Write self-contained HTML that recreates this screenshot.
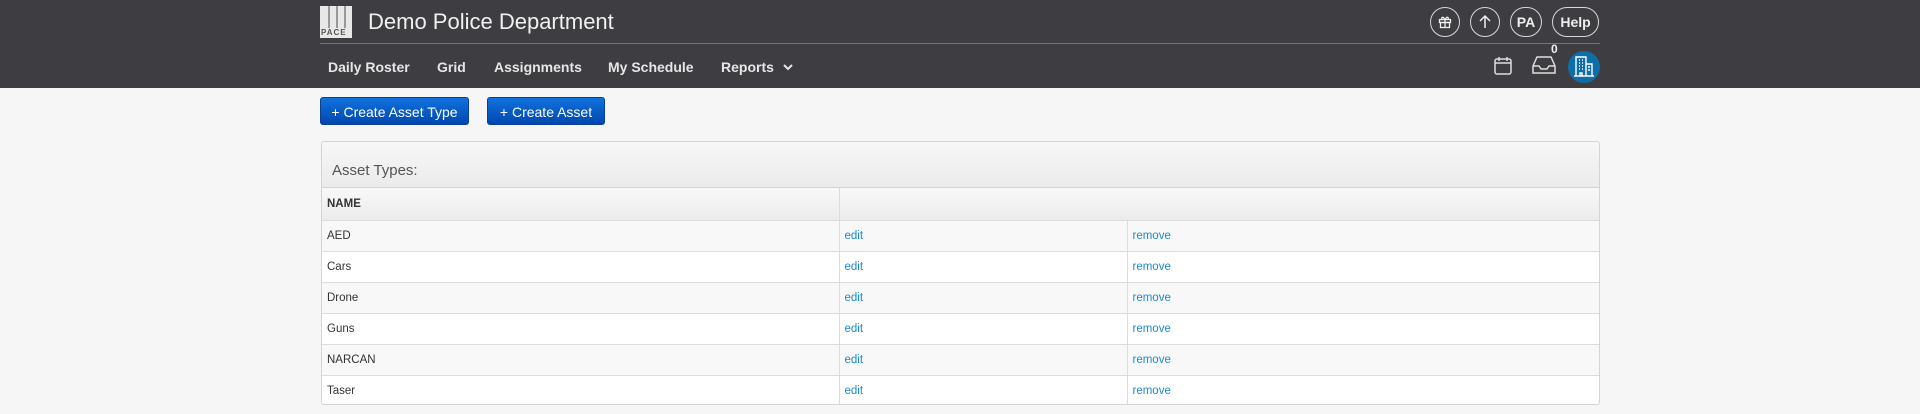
<!DOCTYPE html>
<html><head><meta charset="utf-8"><style>
*{margin:0;padding:0;box-sizing:border-box}
body{width:1920px;height:414px;overflow:hidden;background:#f6f6f6;font-family:"Liberation Sans",sans-serif;position:relative}
.hdr{position:absolute;left:0;top:0;width:1920px;height:88px;background:#3e3e42}
.abs{position:absolute}
.title{left:368px;top:7px;color:#f0f0f0;font-size:22px;line-height:30px}
.sep{left:320px;top:43px;width:1280px;height:1px;background:#76767a}
.nav{top:57px;color:#e6e6e6;font-size:14px;font-weight:bold;line-height:20px}
.circ{border:1.5px solid #d8d8d8;border-radius:16px;color:#eee;height:30px;top:7px;font-size:14px;font-weight:bold;display:flex;align-items:center;justify-content:center}
.btn{top:97px;height:28px;border-radius:3px;background:linear-gradient(#1172dd,#0047b0);color:#fff;font-size:14px;line-height:28px;text-align:center;border:1px solid #0a3f96}
.panel{left:321px;top:141px;width:1279px;height:264px;border:1px solid #d4d4d4;border-radius:3px;background:#fff;overflow:hidden}
.ph{height:46px;background:linear-gradient(#f7f7f7,#ebebeb);border-bottom:1px solid #d4d4d4;font-size:15px;color:#555;padding:20px 0 0 10px}
table{border-collapse:collapse;width:100%;font-size:11.5px;color:#333}
td{height:31px;border-bottom:1px solid #dcdcdc;border-right:1px solid #dcdcdc;padding:0 5px;vertical-align:middle}
td:last-child{border-right:none}
tr.h td{background:linear-gradient(#f8f8f8,#ececec);font-weight:bold;height:32px}
tr.g td{background:#f8f8f8}
tr:last-child td{border-bottom:none}
a{color:#1a8ad1;text-decoration:none}
</style></head><body>
<div class="hdr">
<div class="abs" style="left:320px;top:6px;width:32px;height:32px;background:#e8e8e8">
<div class="abs" style="left:8px;top:0;width:2px;height:22px;background:#999"></div>
<div class="abs" style="left:16px;top:0;width:2px;height:22px;background:#999"></div>
<div class="abs" style="left:24px;top:0;width:2px;height:22px;background:#999"></div>
<div class="abs" style="left:1px;top:22px;font-size:8px;font-weight:bold;color:#555;letter-spacing:1px">PACE</div>
</div>
<div class="abs title">Demo Police Department</div>
<div class="abs sep"></div>
<div class="abs nav" style="left:328px">Daily Roster</div>
<div class="abs nav" style="left:437px">Grid</div>
<div class="abs nav" style="left:494px">Assignments</div>
<div class="abs nav" style="left:608px">My Schedule</div>
<div class="abs nav" style="left:721px">Reports <svg width="12" height="10" viewBox="0 0 12 10" style="margin-left:4px"><path d="M2 3l4 4 4-4" stroke="#e6e6e6" stroke-width="2" fill="none"/></svg></div>
<div class="abs circ" style="left:1430px;width:30px"><svg width="14" height="14" viewBox="0 0 14 14" fill="none" stroke="#eee" stroke-width="1.3"><rect x="1.5" y="4.5" width="11" height="3"/><rect x="2.5" y="7.5" width="9" height="5"/><path d="M7 4.5v8M7 4.5C5 1 3 2 4 4.5M7 4.5C9 1 11 2 10 4.5"/></svg></div>
<div class="abs circ" style="left:1470px;width:30px"><svg width="14" height="16" viewBox="0 0 14 16" fill="none" stroke="#eee" stroke-width="1.5"><path d="M7 14V2M2 7l5-5 5 5"/></svg></div>
<div class="abs circ" style="left:1510px;width:32px">PA</div>
<div class="abs circ" style="left:1552px;width:47px">Help</div>
<svg class="abs" style="left:1494px;top:56px" width="18" height="19" viewBox="0 0 18 19" fill="none" stroke="#ddd" stroke-width="1.5"><rect x="1" y="3" width="16" height="15" rx="2"/><path d="M1 7h16M5 1v4M13 1v4"/></svg>
<svg class="abs" style="left:1532px;top:56px" width="24" height="19" viewBox="0 0 24 19" fill="none" stroke="#ddd" stroke-width="1.5"><path d="M1 10L5 1h14l4 9v7H1zM1 10h6l2 3h6l2-3h6"/></svg>
<div class="abs" style="left:1551px;top:42px;color:#eee;font-size:12px;font-weight:bold">0</div>
<div class="abs" style="left:1568px;top:51px;width:32px;height:32px;border-radius:50%;background:#0f6ea8"></div>
<svg class="abs" style="left:1574px;top:56px" width="20" height="21" viewBox="0 0 20 21" fill="none" stroke="#fff" stroke-width="1.4"><path d="M2 20V1h10v19M12 8h6v12M0 20h20M5 4h1M8 4h1M5 7h1M8 7h1M5 10h1M8 10h1M5 13h1M8 13h1M14 11h2M14 14h2M6 20v-3h2v3"/></svg>
</div>
<div class="abs btn" style="left:320px;width:149px">+ Create Asset Type</div>
<div class="abs btn" style="left:487px;width:118px">+ Create Asset</div>
<div class="abs panel">
<div class="ph">Asset Types:</div>
<table>
<tr class="h"><td style="width:517px">NAME</td><td colspan="2"></td></tr>
<tr class="g"><td>AED</td><td style="width:288px"><a>edit</a></td><td><a>remove</a></td></tr>
<tr><td>Cars</td><td><a>edit</a></td><td><a>remove</a></td></tr>
<tr class="g"><td>Drone</td><td><a>edit</a></td><td><a>remove</a></td></tr>
<tr><td>Guns</td><td><a>edit</a></td><td><a>remove</a></td></tr>
<tr class="g"><td>NARCAN</td><td><a>edit</a></td><td><a>remove</a></td></tr>
<tr><td>Taser</td><td><a>edit</a></td><td><a>remove</a></td></tr>
</table>
</div>
</body></html>
